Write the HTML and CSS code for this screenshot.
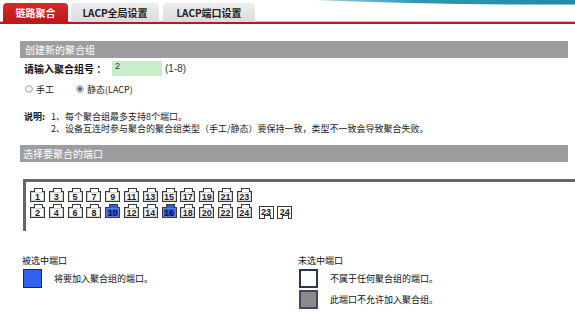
FILE: index.html
```html
<!DOCTYPE html>
<html lang="zh-CN">
<head>
<meta charset="utf-8">
<title>链路聚合</title>
<link rel="stylesheet" href="styles.css">
</head>
<body>
<svg class="swoosh" width="260" height="6" viewBox="0 0 260 6" aria-hidden="true">
  <defs>
    <linearGradient id="sw" x1="0" x2="1" y1="0" y2="0">
      <stop offset="0" stop-color="#9fd0dc"/>
      <stop offset="0.4" stop-color="#2f98b2"/>
      <stop offset="1" stop-color="#2489a4"/>
    </linearGradient>
  </defs>
  <path d="M0 0 Q120 5 260 4.5 L260 0 Z" fill="url(#sw)"/>
</svg>

<div class="tabs">
  <div class="tab tab-active tab-a">链路聚合</div>
  <div class="tab tab-b">LACP全局设置</div>
  <div class="tab tab-c">LACP端口设置</div>
</div>

<div class="panel">
  <div class="bar">创建新的聚合组</div>

  <div class="form-row">
    <span class="label">请输入聚合组号 ：</span>
    <span class="input">2</span>
    <span class="range">(1-8)</span>
  </div>

  <div class="radio-row">
    <span class="radio"></span><span class="radio-text">手工</span>
    <span class="radio radio-on"></span><span class="radio-text">静态(LACP)</span>
  </div>

  <div class="note">
    <span class="note-label">说明:</span>
    <span>1、每个聚合组最多支持8个端口。</span>
    <span></span>
    <span>2、设备互连时参与聚合的聚合组类型（手工/静态）要保持一致，类型不一致会导致聚合失败。</span>
  </div>

  <div class="bar bar-2">选择要聚合的端口</div>

  <div class="port-box">
    <div class="port-row">
      <div class="port">1</div>
      <div class="port">3</div>
      <div class="port">5</div>
      <div class="port">7</div>
      <div class="port">9</div>
      <div class="port">11</div>
      <div class="port">13</div>
      <div class="port">15</div>
      <div class="port">17</div>
      <div class="port">19</div>
      <div class="port">21</div>
      <div class="port">23</div>
    </div>
    <div class="port-row">
      <div class="port">2</div>
      <div class="port">4</div>
      <div class="port">6</div>
      <div class="port">8</div>
      <div class="port port-sel">10</div>
      <div class="port">12</div>
      <div class="port">14</div>
      <div class="port port-sel">16</div>
      <div class="port">18</div>
      <div class="port">20</div>
      <div class="port">22</div>
      <div class="port">24</div>
      <div class="port port-sfp port-first-sfp">23</div>
      <div class="port port-sfp">24</div>
    </div>
  </div>

  <div class="legend">
    <div class="legend-col">
      <div class="legend-title">被选中端口</div>
      <div class="legend-item"><span class="swatch swatch-blue"></span><span>将要加入聚合组的端口。</span></div>
    </div>
    <div class="legend-col">
      <div class="legend-title">未选中端口</div>
      <div class="legend-item"><span class="swatch swatch-white"></span><span>不属于任何聚合组的端口。</span></div>
      <div class="legend-item"><span class="swatch swatch-gray"></span><span>此端口不允许加入聚合组。</span></div>
    </div>
  </div>
</div>
</body>
</html>
```

FILE: styles.css
```css
* { box-sizing: border-box; }

html, body {
  margin: 0;
  padding: 0;
  background: #fff;
}

body {
  position: relative;
  width: 575px;
  height: 315px;
  overflow: hidden;
  font-family: "Noto Sans CJK SC", "Noto Sans", sans-serif;
  font-size: 9px;
  color: #222;
}

.swoosh {
  position: absolute;
  top: 0;
  right: 0;
}

/* tabs */
.tabs {
  display: flex;
  gap: 3px;
  padding: 3px 0 0 3px;
  height: 24px;
  border-bottom: 2px solid #b41b1d;
  box-shadow: 0 -1px 0 #f1b3b3 inset;
}

.tab {
  height: 19px;
  line-height: 19px;
  text-align: center;
  font-size: 10px;
  font-weight: bold;
  color: #222;
  background: linear-gradient(#ececec, #dcdcdc);
  border-radius: 4px 4px 0 0;
}

.tab-active {
  background: linear-gradient(#d42a2a, #c01818);
  color: #fff;
}

.tab-a { width: 65px; }
.tab-b { width: 88px; }
.tab-c { width: 92px; margin-left: 1px; }

/* panel */
.panel {
  margin: 17px 7px 0 20px;
}

.bar {
  height: 17px;
  line-height: 17px;
  padding-left: 5px;
  background: #9c9d9f;
  color: #fff;
  font-size: 10px;
}

.bar-2 {
  margin-top: 10px;
  padding-left: 3px;
}

.form-row {
  display: flex;
  align-items: center;
  height: 15px;
  margin-top: 3px;
  padding-left: 4px;
}

.label {
  width: 88px;
  font-size: 10px;
  font-weight: bold;
  color: #111;
}

.input {
  width: 50px;
  height: 15px;
  background: #c9ecca;
  padding-left: 3px;
  font-family: "Liberation Sans", sans-serif;
  font-size: 9px;
  line-height: 11px;
  color: #333;
}

.range {
  margin-left: 3px;
  font-family: "Liberation Sans", sans-serif;
  font-size: 10px;
  color: #333;
}

.radio-row {
  display: flex;
  align-items: center;
  height: 14px;
  margin-top: 6px;
  padding-left: 5px;
}

.radio {
  width: 8px;
  height: 8px;
  border-radius: 50%;
  border: 1px solid #a8a8a8;
  background: radial-gradient(circle at 40% 40%, #fff, #dcdcdc);
}

.radio-on {
  margin-left: 22px;
  background: radial-gradient(circle, #3f6fb8 0 1.6px, #d6d6d6 2.2px);
}

.radio-text {
  margin-left: 3px;
  font-size: 9px;
  color: #222;
}

.note {
  display: grid;
  grid-template-columns: 27px auto;
  margin-top: 15px;
  padding-left: 4px;
  line-height: 12px;
  font-size: 9px;
  color: #222;
}

.note-label {
  font-weight: bold;
  color: #111;
}

/* ports */
.port-box {
  margin: 17px -7px 0 3px;
  height: 52px;
  border-top: 3px solid #666;
  border-left: 3px solid #666;
  padding: 6px 0 0 4px;
  display: flex;
  flex-direction: column;
  gap: 2px;
}

.port-row {
  display: flex;
  gap: 3.8px;
}

.port {
  position: relative;
  width: 15px;
  height: 11px;
  margin-top: 3px;
  border: 1px solid #3a3a3a;
  background: #fff;
  box-shadow: inset 0 0 0 1px #d0d0d0;
  font-family: "Liberation Sans", sans-serif;
  font-size: 9px;
  font-weight: bold;
  line-height: 10px;
  text-align: center;
  color: #1a1a1a;
}

.port::before {
  content: "";
  position: absolute;
  left: 3px;
  top: -4px;
  width: 7px;
  height: 3px;
  border: 1px solid #3a3a3a;
  border-bottom: none;
  background: inherit;
}

.port-sel {
  background: #2f5fe0;
  box-shadow: inset 0 0 0 1px #5a80e8;
  color: #0a1030;
}

.port-sfp {
  margin-top: 2px;
  height: 13px;
  box-shadow: none;
  line-height: 11px;
}

.port-sfp::before {
  top: auto;
  bottom: -1px;
  left: 4px;
  width: 5px;
  height: 3px;
  background: #fff;
}

.port-first-sfp {
  margin-left: 3px;
}

/* legend */
.legend {
  display: grid;
  grid-template-columns: 276px auto;
  margin-top: 24px;
  padding-left: 2px;
}

.legend-title {
  height: 12px;
  line-height: 12px;
  font-size: 9px;
  color: #111;
}

.legend-item {
  display: flex;
  align-items: center;
  gap: 12px;
  margin-top: 2px;
  margin-bottom: 2px;
  padding-left: 1px;
  font-size: 9px;
  color: #111;
}

.swatch {
  width: 19px;
  height: 19px;
  border: 1px solid #1e2a55;
}

.swatch-blue { background: #2f62f2; }
.swatch-white { background: #fff; border: 2px solid #2b3452; }
.swatch-gray { background: #8b8b8b; border: 2px solid #3e4766; }
```
